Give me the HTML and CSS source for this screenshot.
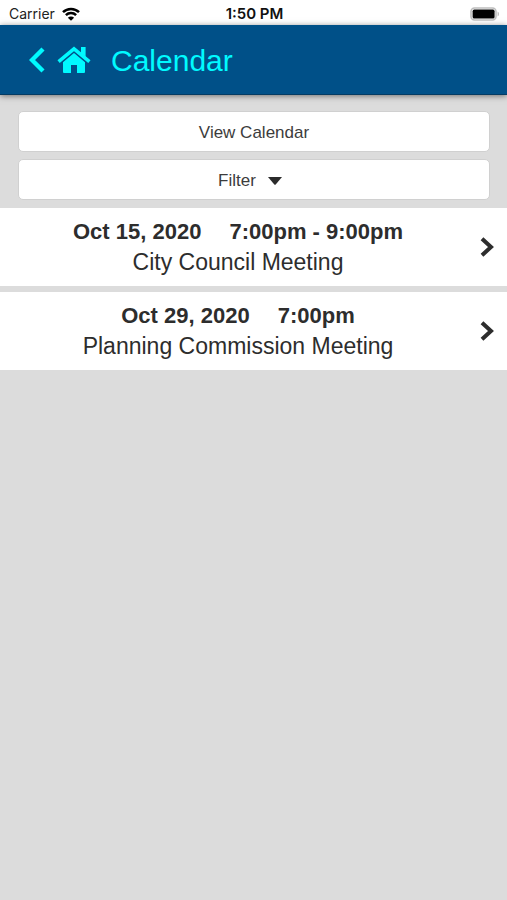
FILE: index.html
```html
<!DOCTYPE html>
<html lang="en">
<head>
<meta charset="utf-8">
<meta name="viewport" content="width=device-width, initial-scale=1">
<title>Calendar</title>
<link rel="stylesheet" href="styles.css">
</head>
<body>
<div class="status">
  <div class="carrier">
    <span>Carrier</span>
    <svg class="wifi" viewBox="0 0 18 14" aria-hidden="true">
      <path d="M1 5.200a11.300 11.300 0 0 1 16 0M3.900 8.200a7.200 7.200 0 0 1 10.200 0" fill="none" stroke="#000" stroke-width="2.500"/>
      <path d="M9 13.800 5.900 10.700a4.400 4.400 0 0 1 6.200 0z"/>
    </svg>
  </div>
  <span class="time">1:50 PM</span>
  <svg class="battery" viewBox="0 0 30 14" aria-hidden="true">
    <rect x="1" y="1" width="25" height="12" rx="3.5" fill="#fff" stroke="#bdbdbd" stroke-width="1.6"/>
    <rect x="2.6" y="2.6" width="22" height="9" rx="1.6"/>
    <path d="M27.6 4.6a2.8 2.8 0 0 1 0 4.8z" fill="#b5b5b5"/>
  </svg>
</div>
<header class="header">
  <a class="back" href="#" aria-label="Back">
    <svg viewBox="0 0 16 26" aria-hidden="true"><path d="M14 2 3 13l11 11" fill="none" stroke="currentColor" stroke-width="4.4"/></svg>
  </a>
  <a class="home" href="#" aria-label="Home">
    <svg viewBox="0 0 34 28" aria-hidden="true">
      <path d="M1.6 15.6 17 2.8l15.400 12.800" fill="none" stroke="currentColor" stroke-width="3.500"/>
      <path d="M24 1h4.600v10L24 7zM17 7l11 9.200V26q0 1-1 1h-7v-8h-6v8H7q-1 0-1-1v-9.800z" fill="currentColor"/>
    </svg>
  </a>
  <h1>Calendar</h1>
</header>
<main>
  <div class="actions">
    <button type="button">View Calendar</button>
    <button type="button">Filter
      <svg class="caret" viewBox="0 0 14 8" aria-hidden="true"><path d="M0 0h14L7.7 7.500q-.7.600-1.400 0z" fill="#2b2b2b"/></svg>
    </button>
  </div>
  <ul class="events">
    <li><a class="event" href="#">
      <span class="info">
        <span class="when"><span>Oct 15, 2020</span><span>7:00pm - 9:00pm</span></span>
        <span class="name">City Council Meeting</span>
      </span>
      <svg class="arrow" viewBox="0 0 14 20" aria-hidden="true"><path d="m2 1.700 9 8.300-9 8.300" fill="none" stroke="currentColor" stroke-width="4"/></svg>
    </a></li>
    <li><a class="event" href="#">
      <span class="info">
        <span class="when"><span>Oct 29, 2020</span><span>7:00pm</span></span>
        <span class="name">Planning Commission Meeting</span>
      </span>
      <svg class="arrow" viewBox="0 0 14 20" aria-hidden="true"><path d="m2 1.700 9 8.300-9 8.300" fill="none" stroke="currentColor" stroke-width="4"/></svg>
    </a></li>
  </ul>
</main>
</body>
</html>
```
FILE: styles.css
```css
* {
  box-sizing: border-box;
}

body {
  margin: 0;
  min-height: 100vh;
  background: #dcdcdc;
  color: #2d2d2d;
  font-family: "Liberation Sans", Arial, sans-serif;
}

svg {
  display: block;
}

.status {
  display: grid;
  grid-template-columns: 1fr auto 1fr;
  align-items: center;
  padding: 2px 7px 0 9px;
  height: 25px;
  background: #fff;
  color: #222;
  font: 14px/23px Inter, sans-serif;
}

.carrier {
  display: flex;
  align-items: center;
  gap: 7px;
}

.wifi {
  width: 18px;
  height: 14px;
}

.time {
  color: #111;
  font-size: 15px;
  font-weight: 600;
}

.battery {
  justify-self: end;
  width: 30px;
  height: 14px;
}

.header {
  display: flex;
  align-items: center;
  height: 70px;
  padding: 0 29px;
  background: #005088;
  border-bottom: 1px solid #043b63;
  box-shadow: 0 1px 6px rgba(0, 0, 0, 0.5);
  color: #00faff;
}

.header a {
  color: inherit;
}

.back svg {
  width: 16px;
  height: 26px;
}

.home {
  margin: 0 20px 0 12px;
}

.home svg {
  width: 34px;
  height: 28px;
}

h1 {
  margin: 0;
  padding-top: 2px;
  font-size: 30px;
  font-weight: 400;
  line-height: 36px;
}

.actions {
  display: grid;
  gap: 7px;
  padding: 16px 17px 8px 18px;
}

button {
  display: flex;
  align-items: center;
  justify-content: center;
  gap: 12px;
  height: 41px;
  padding: 2px 0 0;
  border: 1px solid #d0d0d0;
  border-radius: 5px;
  background: #fff;
  color: #3c3c3c;
  font-family: inherit;
  font-size: 17px;
}

.caret {
  width: 14px;
  height: 8px;
  margin-right: 8px;
}

.events {
  display: grid;
  gap: 6px;
  margin: 0;
  padding: 0;
  list-style: none;
}

.event {
  display: flex;
  align-items: center;
  gap: 4px;
  padding: 9px 13px 9px 0;
  background: #fff;
  color: inherit;
  text-decoration: none;
}

.info {
  flex: 1;
  text-align: center;
  line-height: 30px;
}

.when {
  display: flex;
  justify-content: center;
  gap: 28px;
  font-size: 22px;
  font-weight: 700;
}

.name {
  display: block;
  font-size: 23px;
}

.arrow {
  width: 14px;
  height: 20px;
}
```
